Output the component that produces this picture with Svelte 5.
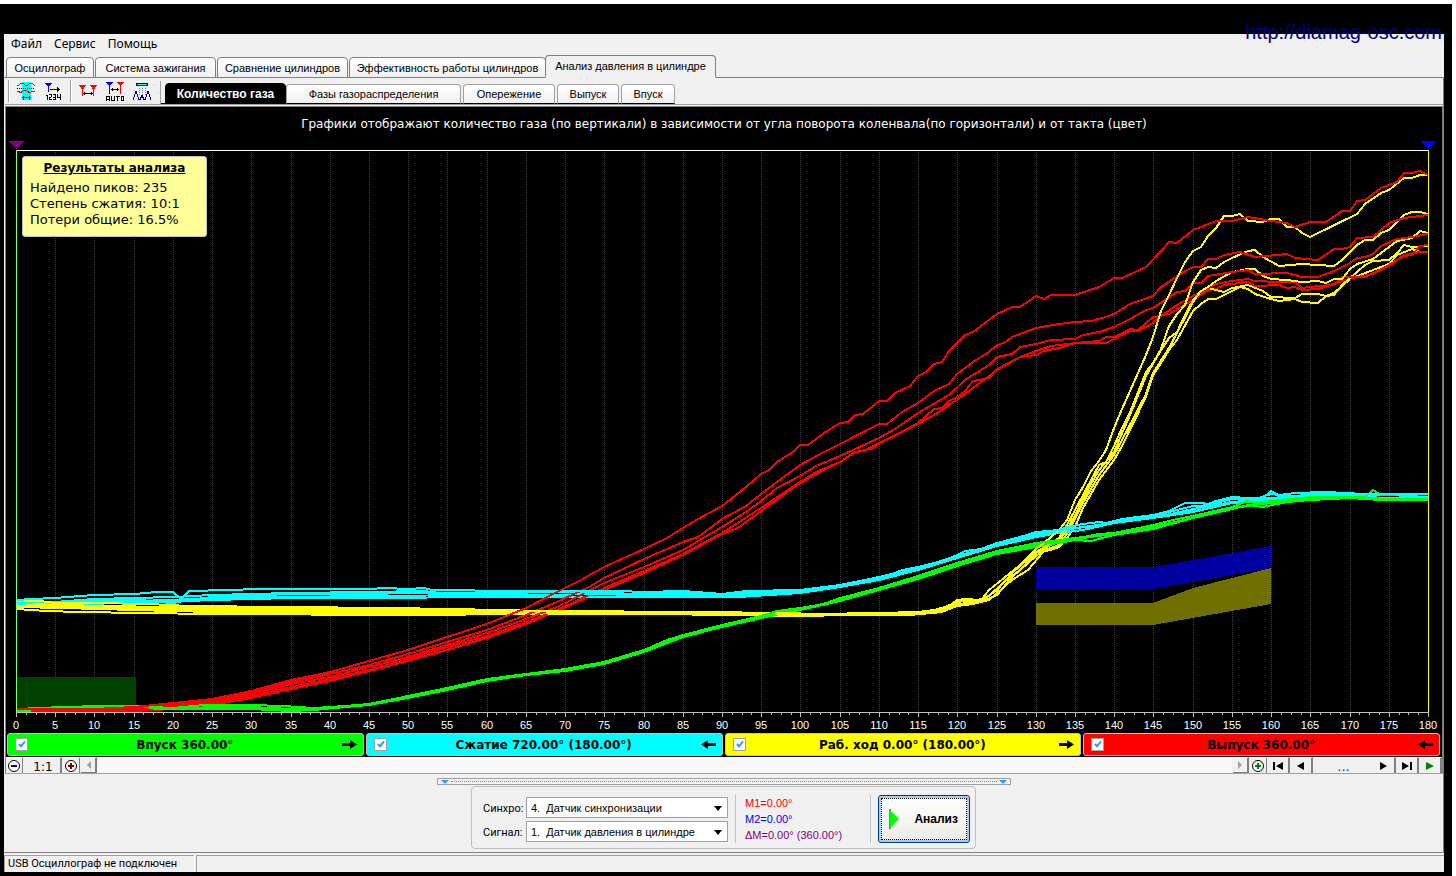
<script>
    let chartWidth = 1435;

    const chartHeight = 626;
    const plotTop = 43;
    const plotBottom = 605;
    const padLeft = 10;
    const padRight = 14;
    // sample values are counted in pixels down from the window top
    const origin = 107;

    const menu = ['Файл', 'Сервис', 'Помощь'];

    const tabs = [
        { title: 'Осциллограф', width: 88 },
        { title: 'Система зажигания', width: 121 },
        { title: 'Сравнение цилиндров', width: 131 },
        { title: 'Эффективность работы цилиндров', width: 197 },
        { title: 'Анализ давления в цилиндре', width: 171 }
    ];
    let activeTab = 4;

    const subTabs = [
        { title: 'Количество газа', width: 121 },
        { title: 'Фазы газораспределения', width: 175 },
        { title: 'Опережение', width: 92 },
        { title: 'Выпуск', width: 62 },
        { title: 'Впуск', width: 54 }
    ];
    let activeSubTab = 0;

    let strokes = [
        { id: 'intake', title: 'Впуск 360.00°', color: '#00ff00', dir: 'right', visible: true },
        { id: 'compression', title: 'Сжатие 720.00° (180.00°)', color: '#00ffff', dir: 'left', visible: true },
        { id: 'power', title: 'Раб. ход 0.00° (180.00°)', color: '#ffff00', dir: 'right', visible: true },
        { id: 'exhaust', title: 'Выпуск 360.00°', color: '#ff0000', dir: 'left', visible: true }
    ];

    let sync = '4';
    let signal = '1';

    // "angle,level" pairs, one string per cycle
    const data = {
        exhaust: [
            '0,709 10,709 15,707 20,703 25,699 30,691 35,680 37,677 40,672 45,661 50,650 55,637 60,624 65,608 69,592 72,580 75,567 80,549 83,538 85,528 87,519 90,506 93,487 95,474 96,470 97,462 99,452 100,445 101,445 103,433 105,423 106,422 107,415 108,414 110,401 111,401 112,393 114,386 115,376 116,372 117,364 118,362 119,351 121,335 122,332 125,314 127,307 128,307 130,296 131,299 132,295 135,295 138,287 140,278 141,278 144,267 146,251 147,242 148,243 150,230 153,221 155,221 157,217 160,221 162,223 163,227 165,222 167,222 169,211 170,211 171,201 172,200 174,188 176,182 177,173 178,173 179,171 180,175',
            '0,709 10,709 15,709 20,705 25,700 30,692 35,682 40,674 45,665 50,654 55,642 60,630 65,615 69,602 73,587 75,578 80,559 85,542 87,537 90,519 93,506 95,494 97,482 100,465 103,452 105,444 110,424 111,424 113,412 115,403 117,391 119,384 120,374 122,362 124,352 125,345 126,343 127,337 130,328 133,324 135,322 137,321 139,317 140,314 142,304 145,296 146,287 149,271 150,267 151,267 152,259 153,259 154,255 156,252 158,257 162,254 163,258 166,260 168,249 169,249 170,247 171,238 173,237 175,223 177,218 180,215',
            '0,710 10,710 15,710 20,707 25,702 30,694 35,684 40,677 45,667 50,657 55,645 60,633 65,619 69,607 72,595 75,583 80,567 85,550 90,527 93,512 95,501 97,488 100,476 102,466 105,456 110,438 112,429 115,413 119,395 121,380 124,365 125,357 127,354 128,347 130,344 132,340 135,339 136,335 138,332 140,327 142,319 144,310 145,308 148,292 149,291 150,283 151,283 152,276 155,272 157,270 158,274 162,273 164,277 166,277 168,271 170,263 171,258 172,257 173,254 174,246 176,239 178,237 180,234',
            '0,710 10,711 15,711 20,708 25,704 30,696 35,687 40,679 45,670 50,659 55,647 60,636 65,622 69,610 75,588 80,571 85,554 90,533 95,508 100,482 102,472 105,462 107,452 108,451 110,443 113,432 115,423 117,409 118,408 119,401 120,397 121,391 122,381 124,378 125,369 128,357 130,351 132,346 135,343 138,341 139,337 140,337 141,333 142,329 143,330 145,317 146,316 148,305 150,296 153,284 155,281 157,279 158,281 161,282 163,282 164,288 166,286 168,285 169,277 172,277 174,269 175,265 176,260 177,256 178,255 179,246 180,245',
            '0,711 10,711 15,711 20,709 25,705 30,698 35,689 40,681 45,671 50,661 55,650 60,638 65,624 69,611 75,590 80,573 85,555 90,534 92,528 95,511 100,483 103,470 105,462 107,452 109,449 110,444 112,435 115,424 117,415 119,405 121,394 122,388 124,376 125,370 128,357 129,356 130,355 131,351 133,348 135,343 139,343 141,335 142,331 143,331 145,323 146,315 147,314 150,300 152,290 153,289 154,285 157,282 158,286 161,285 162,288 163,287 164,290 166,289 169,281 171,277 173,274 175,266 177,255 179,252 180,252'
        ],
        power: [
            '0,601 3,601 5,603 10,603 17,604 22,606 34,607 48,608 55,609 62,610 67,611 75,611 80,612 90,612 95,613 105,614 115,612 117,610 119,606 120,600 121,599 123,600 124,590 126,578 128,565 130,549 131,543 133,530 134,520 135,500 136,487 137,471 138,461 139,450 140,428 141,409 143,373 144,355 145,337 146,311 147,295 148,278 149,262 150,251 151,247 152,236 153,228 154,216 155,216 156,214 157,221 159,222 160,219 161,219 162,227 163,227 164,233 165,237 171,214 172,204 174,193 175,190 177,178 178,178 179,175 180,175',
            '0,603 5,605 12,606 25,608 40,609 50,610 60,611 70,611 76,612 85,612 92,613 100,614 112,613 116,612 118,608 120,602 121,601 123,601 125,590 127,573 130,552 132,543 133,538 134,525 135,510 137,480 138,465 139,462 140,446 141,428 142,412 144,372 145,363 146,349 147,326 148,314 149,305 150,282 151,270 152,267 153,268 154,262 155,258 157,251 158,250 159,257 161,266 164,264 168,266 169,260 171,245 172,240 173,240 174,233 175,230 177,215 178,212 179,212 180,214',
            '0,605 6,607 15,608 25,610 45,611 55,612 70,613 80,613 94,614 108,614 114,614 117,611 119,606 122,602 124,596 126,582 128,570 130,553 132,545 133,541 134,530 135,515 137,484 138,470 140,452 142,415 144,376 146,350 147,338 148,332 149,315 150,300 151,291 152,287 153,281 155,272 157,269 158,269 159,276 160,279 162,280 164,282 166,281 167,283 168,279 169,279 170,269 171,264 173,259 176,241 178,238 179,231 180,233',
            '0,607 6,608 15,610 25,612 45,613 60,613 75,614 90,614 103,615 114,615 117,612 119,608 120,604 123,602 125,595 127,577 130,556 131,550 132,548 133,545 134,534 136,503 138,475 140,455 141,440 144,394 145,373 147,348 148,333 150,302 151,291 152,288 154,292 155,288 157,285 159,291 160,297 163,298 164,294 166,294 167,296 168,295 169,285 172,265 173,261 175,260 176,253 177,245 178,247 180,246',
            '0,609 4,611 8,612 16,613 25,614 50,615 65,614 80,614 92,615 96,616 101,616 105,615 114,615 118,612 120,606 122,604 124,600 127,580 129,570 131,551 132,550 133,547 134,538 135,527 136,508 138,480 140,460 141,446 144,397 145,375 146,363 147,350 148,340 150,311 151,304 152,299 153,299 155,291 156,287 157,289 158,294 160,299 161,301 163,299 164,302 166,303 167,296 168,293 170,279 173,270 175,264 176,255 178,249 179,252 180,252'
        ],
        compression: [
            '0,600 2,599 5,598 10,595 15,594 18,592 20,592 21,599 22,591 27,590 31,589 35,589 45,589 47,588 50,589 52,588 53,590 57,590 60,591 70,591 77,591 80,592 85,591 90,594 93,591 100,590 105,585 110,577 112,573 113,570 115,567 118,561 120,555 121,551 123,549 125,543 128,537 130,532 133,530 134,527 136,524 138,522 139,523 141,519 145,515 147,511 149,503 151,503 152,504 153,501 155,497 157,498 159,498 160,491 161,495 163,493 167,492 172,494 180,494',
            '0,603 5,602 10,599 15,598 20,597 25,595 35,593 45,592 52,591 55,594 60,593 70,592 80,594 85,592 90,594 94,593 100,591 105,587 110,579 115,568 120,556 125,545 128,539 130,534 132,532 134,529 138,525 140,522 145,516 148,510 150,506 151,506 153,503 155,499 158,499 160,494 163,497 165,493 170,495 175,495 180,497',
            '0,604 5,603 10,601 15,599 18,602 20,603 22,600 25,597 35,594 45,594 50,593 60,593 67,595 75,594 85,594 90,596 95,593 100,592 105,586 110,578 115,569 120,557 125,544 130,535 133,532 135,528 138,526 140,523 145,517 149,512 151,510 153,505 157,500 160,498 165,495 170,495 174,499 180,497',
            '0,605 5,604 10,603 15,601 20,600 25,598 35,597 45,596 60,595 73,597 80,596 90,596 95,594 100,592 105,587 110,580 115,570 120,558 125,546 130,537 133,533 136,530 140,523 145,518 150,512 155,503 160,501 165,496 170,497 175,498 180,500',
            '0,606 5,605 10,604 15,602 22,601 25,600 35,598 45,598 60,597 70,597 80,597 92,597 100,593 105,587 110,580 115,569 120,558 125,546 130,536 135,528 140,523 145,518 150,509 155,502 160,499 165,495 170,496 177,499 180,498'
        ],
        intake: [
            '0,709 6,707 11,706 15,706 20,708 24,705 30,705 34,706 38,708 42,706 45,704 50,696 55,688 60,679 65,674 70,669 75,662 80,650 83,640 85,635 90,625 95,616 97,611 100,608 103,604 105,598 110,588 115,576 120,563 125,551 130,543 133,540 135,538 136,537 138,534 140,533 145,525 148,519 150,516 155,507 157,501 158,503 160,501 165,497 170,497 172,497 173,490 174,495 178,494 180,494',
            '0,710 8,708 15,708 20,709 25,707 30,707 35,709 40,708 45,704 50,697 55,689 60,680 65,675 70,670 75,663 80,651 85,636 90,626 95,617 98,611 100,609 105,600 110,589 115,577 120,565 125,553 130,545 135,539 140,534 145,527 150,518 155,508 160,503 165,499 170,497 175,499 180,499',
            '0,711 8,709 15,709 20,709 25,709 30,709 35,711 38,710 42,707 45,705 50,698 55,690 60,681 65,675 70,671 75,664 80,652 85,637 90,627 95,618 100,610 105,601 110,590 115,579 120,566 125,554 130,547 135,540 137,541 140,535 145,529 150,518 155,509 157,505 159,507 162,502 165,500 170,498 174,500 180,500'
        ]
    };

    const drawOrder = ['power', 'intake', 'compression', 'exhaust'];
    const cycles = [4, 3, 2, 1, 0];

    $: step = (chartWidth - padLeft - padRight) / 180;
    $: xOf = (deg) => Math.round(padLeft + deg * step);
    $: toPoints = (line) => line.split(' ').map((pair) => {
        const [deg, level] = pair.split(',').map(Number);
        return xOf(deg) + ',' + (level - origin);
    }).join(' ');

    $: lines = cycles.flatMap((cycle) =>
        drawOrder
            .map((id) => strokes.find((s) => s.id === id))
            .filter((s) => s.visible && data[s.id][cycle])
            .map((s) => ({ color: s.color, points: toPoints(data[s.id][cycle]) }))
    );

    const ticks = Array.from({ length: 37 }, (_, i) => i * 5);
    const minorTicks = Array.from({ length: 144 }, (_, i) => i * 1.25).filter((t) => t % 5 !== 0);
</script>

<div class="screen">
    <a class="site" href="http://diamag-osc.com">http://diamag-osc.com</a>
    <main class="window">
        <nav class="menu">
            {#each menu as item}
                <button>{item}</button>
            {/each}
        </nav>

        <div class="tabs">
            {#each tabs as tab, i}
                <button class="tab" class:active={activeTab === i} style="width: {tab.width}px" on:click={() => activeTab = i}>{tab.title}</button>
            {/each}
        </div>

        <div class="page">
            <div class="toolbar">
                <div class="tools first">
                    <button class="tool" aria-label="Осциллограмма">
                        <svg width="20" height="20" viewBox="0 0 20 20" shape-rendering="crispEdges" fill="none">
                            <path d="M6 1h9v18H6z" fill="#00ffff" />
                            <path d="M1 4.500h2M3 3.500h1M4 2.500h4M8 3.500h1M9 4.500h3M12 3.500h1M13 2.500h4M17 3.500h1M18 4.500h1" stroke="#008000" />
                            <path d="M1 7.500h18" stroke="#000" stroke-dasharray="1 1" />
                            <path d="M1 10.500h3M3 11.500h3M5 10.500h2M7 9.500h4M11 10.500h2M12 11.500h3M15 10.500h4" stroke="#ff0000" />
                            <path d="M6 16.500h9M7.500 14.500v4M13.500 14.500v4" stroke="#000080" />
                        </svg>
                    </button>
                    <button class="tool" aria-label="Нумерация">
                        <svg width="20" height="20" viewBox="0 0 20 20" shape-rendering="crispEdges">
                            <path d="M1 2h7v1H7v1H6v1H5v6H4V5H3V4H2V3H1z" fill="#0000ff" />
                            <path d="M6 8h7V6h1v1h1v1h1v1h-1v1h-1v1h-1V9H6z" />
                            <path d="M2 14.500h1.500v4.500M5 13.500h2.500v2M5.500 19v-2.500h1M5 18.500h3M9 13.500h2.500v5H9M9 16h2M13.500 13v3.500h3M16.500 13v6" stroke="#000" fill="none" />
                        </svg>
                    </button>
                </div>
                <div class="tools second">
                    <button class="tool" aria-label="Маркеры">
                        <svg width="20" height="20" viewBox="0 0 20 20" shape-rendering="crispEdges">
                            <path d="M1 4h7v1H7v1H6v2H5v7H4V8H3V6H2V5H1zM12 4h7v1h-1v1h-1v2h-1v7h-1V8h-1V6h-1V5h-1z" fill="#ff0000" />
                            <path d="M5 12.500h10M6.500 11v3M13.500 11v3" stroke="#000" />
                        </svg>
                    </button>
                    <button class="tool" aria-label="Автоматические маркеры">
                        <svg width="20" height="20" viewBox="0 0 20 20" shape-rendering="crispEdges">
                            <path d="M1 1h7v1H7v1H6v1H5v9H4V4H3V3H2V2H1z" fill="#0000ff" />
                            <path d="M12 1h7v1h-1v1h-1v1h-1v9h-1V4h-1V3h-1V2h-1z" fill="#ff0000" />
                            <path d="M6 8.500h8M7.500 7v3M12.500 7v3" stroke="#000" />
                            <path d="M1.500 20v-4l1-1h1l1 1v4M2 18.500h3M6.500 15v4.500h3V15M11 15.500h4M12.500 15v5M16 15.500h2.500v4H16v-4" stroke="#000" fill="none" />
                        </svg>
                    </button>
                    <button class="tool" aria-label="Пики">
                        <svg width="20" height="20" viewBox="0 0 20 20" shape-rendering="crispEdges" fill="none">
                            <path d="M4.500 2.500h11v2h-11z" fill="#00ffff" stroke="#000" />
                            <path d="M7.500 7v8M10.500 7v8M13.500 7v8" stroke="#808080" stroke-dasharray="1 1" />
                            <path d="M1 18.500L4 10l3 8.500h1l2-4 2 4h1L16 10l3 8.500" stroke="#000080" />
                        </svg>
                    </button>
                </div>
                <div class="subtabs">
                    {#each subTabs as tab, i}
                        <button class="subtab" class:active={activeSubTab === i} style="width: {tab.width}px" on:click={() => activeSubTab = i}>{tab.title}</button>
                    {/each}
                </div>
            </div>

            <section class="view">
                <div class="chart" bind:clientWidth={chartWidth}>
                    <svg width={chartWidth} height={chartHeight}>
                        <text class="title" x={chartWidth / 2} y="21" text-anchor="middle">Графики отображают количество газа (по вертикали) в зависимости от угла поворота коленвала(по горизонтали) и от такта (цвет)</text>
                        <g shape-rendering="crispEdges" fill="none">
                            {#each ticks.slice(1, -1) as deg}
                                <line x1={xOf(deg) + 0.5} x2={xOf(deg) + 0.5} y1={plotTop + 2} y2={plotBottom} stroke="#404040" stroke-dasharray="1 1" />
                            {/each}
                            <rect x={xOf(0)} y="570" width={xOf(15.3) - xOf(0)} height="35" fill="#004000" />
                            <polygon points={toPoints('130,567 145,567 160,546 160,568 145,589 130,589')} fill="#0000a0" />
                            <polygon points={toPoints('130,603 145,603 150,588 160,568 160,604 145,625 130,625')} fill="#707000" />
                            {#each lines as line}
                                <polyline points={line.points} stroke={line.color} stroke-width="2" stroke-linejoin="round" />
                            {/each}
                            <path d="M{xOf(0)} {plotTop + 0.5}H{xOf(180)}" stroke="#fff" />
                            <path d="M{xOf(0)} {plotBottom + 0.5}H{xOf(180)}" stroke="#c0c0c0" />
                            {#each ticks as deg}
                                <path d="M{xOf(deg) + 0.5} {plotBottom}v5" stroke="#c0c0c0" />
                            {/each}
                            {#each minorTicks as deg}
                                <path d="M{xOf(deg) + 0.5} {plotBottom}v3" stroke="#c0c0c0" />
                            {/each}
                            <path d="M{xOf(0) + 0.5} {plotTop}V{plotBottom}" stroke="#80ff80" />
                            <path d="M{xOf(180) + 0.5} {plotTop}V{plotBottom}" stroke="#ffff00" />
                            <path d="M{xOf(0) - 8} 34h16l-8 8z" fill="#800080" />
                            <path d="M{xOf(180) - 8} 34h16l-8 8z" fill="#0000ff" />
                        </g>
                        {#each ticks as deg}
                            <text class="tick" x={xOf(deg)} y="622" text-anchor="middle">{deg}</text>
                        {/each}
                    </svg>
                    <div class="results">
                        <h2>Результаты анализа</h2>
                        <p>Найдено пиков: 235</p>
                        <p>Степень сжатия: 10:1</p>
                        <p>Потери общие: 16.5%</p>
                    </div>
                </div>

                <div class="legend">
                    {#each strokes as stroke}
                        <label style="background: {stroke.color}">
                            <input type="checkbox" bind:checked={stroke.visible} />
                            <span>{stroke.title}</span>
                            <svg class:flip={stroke.dir === 'left'} width="15" height="9" viewBox="0 0 15 9">
                                <path d="M0 3h8V0l7 4.500L8 9V6H0z" />
                            </svg>
                        </label>
                    {/each}
                </div>

                <div class="scroll">
                    <button class="round" aria-label="Уменьшить">
                        <svg width="14" height="14" viewBox="0 0 14 14"><circle cx="7" cy="7" r="5.500" fill="#fff" stroke="#000" /><path d="M4 7h6" stroke="#000080" stroke-width="2" /></svg>
                    </button>
                    <button class="ratio">1:1</button>
                    <button class="round" aria-label="Увеличить">
                        <svg width="14" height="14" viewBox="0 0 14 14"><circle cx="7" cy="7" r="5.500" fill="#fff" stroke="#000" /><path d="M4 7h6M7 4v6" stroke="#800000" stroke-width="2" /></svg>
                    </button>
                    <button class="arrow" aria-label="Влево"><svg width="5" height="8"><path d="M5 0v8L1 4z" fill="#a0a0a0" /></svg></button>
                    <div class="track"></div>
                    <button class="arrow" aria-label="Вправо"><svg width="5" height="8"><path d="M0 0v8l4-4z" fill="#a0a0a0" /></svg></button>
                    <button class="round" aria-label="Добавить">
                        <svg width="14" height="14" viewBox="0 0 14 14"><circle cx="7" cy="7" r="5.500" fill="#fff" stroke="#000" /><path d="M4 7h6M7 4v6" stroke="#008000" stroke-width="2" /></svg>
                    </button>
                    <button class="step" aria-label="В начало"><svg width="12" height="8"><path d="M1 0h2v8H1zM11 0v8L4 4z" /></svg></button>
                    <button class="step" aria-label="Назад"><svg width="12" height="8"><path d="M9 0v8L2 4z" /></svg></button>
                    <button class="more">...</button>
                    <button class="step" aria-label="Вперёд"><svg width="12" height="8"><path d="M2 0v8l7-4z" /></svg></button>
                    <button class="step" aria-label="В конец"><svg width="12" height="8"><path d="M1 0v8l7-4zM9 0h2v8H9z" /></svg></button>
                    <button class="step" aria-label="Пуск"><svg width="12" height="8"><path d="M2 0v8l8-4z" fill="#008000" /></svg></button>
                </div>
            </section>

            <div class="bottom">
                <div class="splitter">
                    <svg width="8" height="5"><path d="M0 1h8L4 5z" fill="#3399ff" /></svg>
                    <span></span>
                    <svg width="8" height="5"><path d="M0 1h8L4 5z" fill="#3399ff" /></svg>
                </div>
                <div class="panel">
                    <div class="inputs">
                        <label for="sync">Синхро:</label>
                        <div class="select">
                            <select id="sync" bind:value={sync}>
                                <option value="4">4.&nbsp; Датчик синхронизации</option>
                            </select>
                            <svg width="8" height="5"><path d="M0 0h8L4 5z" /></svg>
                        </div>
                        <label for="signal">Сигнал:</label>
                        <div class="select">
                            <select id="signal" bind:value={signal}>
                                <option value="1">1.&nbsp; Датчик давления в цилиндре</option>
                            </select>
                            <svg width="8" height="5"><path d="M0 0h8L4 5z" /></svg>
                        </div>
                    </div>
                    <div class="markers">
                        <p class="m1">M1=0.00°</p>
                        <p class="m2">M2=0.00°</p>
                        <p class="dm">ΔM=0.00° (360.00°)</p>
                    </div>
                    <button class="analyze">
                        <svg width="11" height="20"><path d="M1 0v20" stroke="#808080" stroke-width="2" /><path d="M1 1v18L10 10z" fill="#00ff00" /></svg>
                        <span>Анализ</span>
                    </button>
                </div>
            </div>
        </div>

        <footer>
            <span class="status">USB Осциллограф не подключен</span>
            <span class="rest"></span>
        </footer>
    </main>
</div>

<style>
    :global(body) {
        background: #fff;
    }

    .screen {
        box-sizing: border-box;
        min-height: 100vh;
        display: flex;
        position: relative;
        border-top: 4px solid #fff;
        border-right: 4px solid #fff;
        background: #000;
        padding: 30px 8px 4px 4px;
        font-family: "Liberation Sans", Arial, sans-serif;
        font-size: 12px;
        color: #000;
    }

    .site {
        position: absolute;
        top: 16px;
        right: 10px;
        font-size: 20px;
        line-height: 24px;
        color: #000080;
        text-decoration: none;
    }

    .window {
        flex: 1;
        min-width: 0;
        display: flex;
        flex-direction: column;
        background: #f0f0f0;
    }

    button {
        font: inherit;
        color: inherit;
        padding: 0;
        margin: 0;
        border: none;
        background: none;
        white-space: nowrap;
    }

    svg {
        display: block;
    }

    p {
        margin: 0;
    }

    .menu {
        display: flex;
        gap: 12px;
        height: 21px;
        padding-left: 7px;
        font-family: "Noto Sans", sans-serif;
        line-height: 20px;
    }

    .menu button {
        padding-bottom: 2px;
    }

    .tabs {
        display: flex;
        align-items: flex-end;
        gap: 1px;
        height: 23px;
        padding-left: 2px;
        box-shadow: inset 0 -1px #808080;
    }

    .tab {
        box-sizing: border-box;
        height: 21px;
        border: 1px solid #808080;
        border-radius: 4px 4px 0 0;
        background: linear-gradient(#fff, #f0f0f0);
        font-size: 11px;
    }

    .tab.active {
        height: 23px;
        margin-left: -2px;
        padding-bottom: 2px;
        border-bottom-color: #f0f0f0;
        background: #f0f0f0;
    }

    .page {
        flex: 1;
        display: flex;
        flex-direction: column;
        padding-left: 1px;
        border-right: 1px solid #808080;
        border-bottom: 1px solid #808080;
    }

    .toolbar {
        display: flex;
        height: 26px;
        border-bottom: 1px solid #a0a0a0;
    }

    .tools {
        display: flex;
        box-sizing: border-box;
        height: 22px;
        margin-top: 2px;
        border-left: 1px solid #a0a0a0;
        box-shadow: inset 1px 0 #fff;
    }

    .tools.first {
        width: 62px;
        margin-left: 3px;
        padding-left: 7px;
        gap: 8px;
    }

    .tools.second {
        width: 90px;
        padding-left: 7px;
        gap: 7px;
    }

    .subtabs {
        display: flex;
        align-items: flex-end;
        gap: 2px;
        padding-left: 4px;
        margin-top: 3px;
        border-left: 1px solid #a0a0a0;
        box-shadow: inset 0 -1px #000;
    }

    .subtab {
        box-sizing: border-box;
        height: 20px;
        border: 1px solid #a0a0a0;
        border-bottom-color: #000;
        border-radius: 4px 4px 0 0;
        background: linear-gradient(#fff, #f0f0f0);
        font-size: 11px;
    }

    .subtab.active {
        height: 21px;
        margin-right: -2px;
        border-color: #000;
        background: #000;
        color: #fff;
        font-size: 12px;
        font-weight: bold;
    }

    .view {
        margin-top: 1px;
        border: 1px solid #808080;
        border-bottom-color: #a0a0a0;
        background: #000;
    }

    .chart {
        position: relative;
        overflow: hidden;
    }

    .title {
        font-family: "DejaVu Sans", Verdana, sans-serif;
        font-size: 12px;
        fill: #fff;
    }

    .tick {
        font-size: 11px;
        fill: #fff;
    }

    .results {
        position: absolute;
        top: 49px;
        left: 16px;
        box-sizing: border-box;
        width: 185px;
        height: 81px;
        padding: 3px 7px;
        border: 1px solid #c0c0c0;
        border-radius: 3px;
        background: #ffff99;
        font-family: "DejaVu Sans", Verdana, sans-serif;
        font-size: 13px;
        line-height: 16px;
    }

    .results h2 {
        margin: 0 0 4px;
        font-size: 12px;
        text-align: center;
        text-decoration: underline;
    }

    .legend {
        display: grid;
        grid-template-columns: repeat(4, 1fr);
        gap: 2px;
        padding: 0 2px 1px 1px;
    }

    .legend label {
        display: flex;
        align-items: center;
        box-sizing: border-box;
        height: 23px;
        padding: 0 6px 0 7px;
        border: 1px solid #c0c0c0;
        border-radius: 3px;
        font-family: "DejaVu Sans", Verdana, sans-serif;
        font-size: 12px;
        font-weight: bold;
    }

    .legend span {
        flex: 1;
        text-align: center;
    }

    .legend input {
        appearance: none;
        position: relative;
        width: 13px;
        height: 13px;
        margin: 0;
        border: 1px solid #a0a0a0;
        background: #fff;
    }

    .legend input:checked::after {
        content: '';
        position: absolute;
        left: 4px;
        top: 1px;
        width: 2px;
        height: 5px;
        border: solid #3399ff;
        border-width: 0 2px 2px 0;
        transform: rotate(40deg);
    }

    .flip {
        transform: scaleX(-1);
    }

    .scroll {
        display: flex;
        height: 16px;
        gap: 1px;
        background: #f0f0f0;
    }

    .scroll button {
        display: flex;
        align-items: center;
        justify-content: center;
        box-sizing: border-box;
        border-right: 2px solid #808080;
        border-top: 1px solid #fff;
    }

    .scroll .round {
        width: 17px;
        border-right-width: 1px;
    }

    .scroll .ratio {
        width: 38px;
        padding: 2px 0 0 2px;
        font-family: "DejaVu Sans", Verdana, sans-serif;
        font-size: 12px;
    }

    .scroll .arrow {
        width: 16px;
        border-bottom: 1px solid #808080;
    }

    .scroll .step {
        width: 22px;
    }

    .scroll .more {
        width: 59px;
        padding-top: 2px;
        border-right: none;
        font-family: "DejaVu Sans", Verdana, sans-serif;
        font-size: 13px;
        color: #003399;
    }

    .track {
        flex: 1;
        background: #f8f8f8;
    }

    .bottom {
        flex: 1;
        display: flex;
        flex-direction: column;
        align-items: center;
        padding: 4px 1px 0 0;
    }

    .splitter {
        display: flex;
        align-items: center;
        gap: 2px;
        box-sizing: border-box;
        width: 574px;
        height: 7px;
        padding: 0 3px;
        border: 1px solid #a0a0a0;
    }

    .splitter span {
        flex: 1;
        border-top: 1px dotted #3399ff;
    }

    .panel {
        display: flex;
        align-items: center;
        box-sizing: border-box;
        width: 505px;
        margin-top: 1px;
        padding: 8px 5px 5px 11px;
        border: 1px solid #c0c0c0;
        border-radius: 4px;
    }

    .inputs {
        display: grid;
        grid-template-columns: 43px 202px;
        gap: 3px 0;
        align-items: center;
    }

    .inputs label {
        font-family: Roboto, sans-serif;
        font-size: 11px;
        padding-top: 2px;
        white-space: nowrap;
    }

    .select {
        position: relative;
    }

    .select svg {
        position: absolute;
        right: 6px;
        top: 9px;
        pointer-events: none;
    }

    select {
        appearance: none;
        box-sizing: border-box;
        display: block;
        width: 100%;
        height: 21px;
        padding: 1px 18px 0 4px;
        border: 1px solid #a0a0a0;
        border-radius: 0;
        background: #fff;
        font: inherit;
        font-size: 11px;
        color: #000;
    }

    .markers {
        box-sizing: border-box;
        width: 137px;
        margin: 0 7px;
        padding-left: 9px;
        border: solid #c0c0c0;
        border-width: 0 1px;
        line-height: 16px;
        font-size: 11px;
    }

    .m1 {
        color: #ff0000;
    }

    .m2 {
        color: #0000ff;
    }

    .dm {
        color: #800080;
    }

    .analyze {
        display: flex;
        align-items: center;
        gap: 14px;
        box-sizing: border-box;
        width: 92px;
        height: 48px;
        padding-left: 10px;
        border: 1px solid #003c74;
        border-radius: 3px;
        background: linear-gradient(#fff, #ecebe5);
        box-shadow: inset 0 0 0 2px #a8ccf0;
        outline: 1px dotted #000;
        outline-offset: -4px;
        font-size: 12px;
        font-weight: bold;
    }

    footer {
        display: flex;
        gap: 2px;
        height: 17px;
        padding-top: 2px;
        font-family: Roboto, sans-serif;
        font-size: 11px;
        line-height: 16px;
    }

    footer span {
        box-sizing: border-box;
        border: solid #a0a0a0;
        border-width: 1px 0 0 1px;
        padding-left: 3px;
    }

    .status {
        width: 190px;
        box-shadow: 1px 0 #fff;
        white-space: nowrap;
    }

    .rest {
        flex: 1;
    }
</style>
